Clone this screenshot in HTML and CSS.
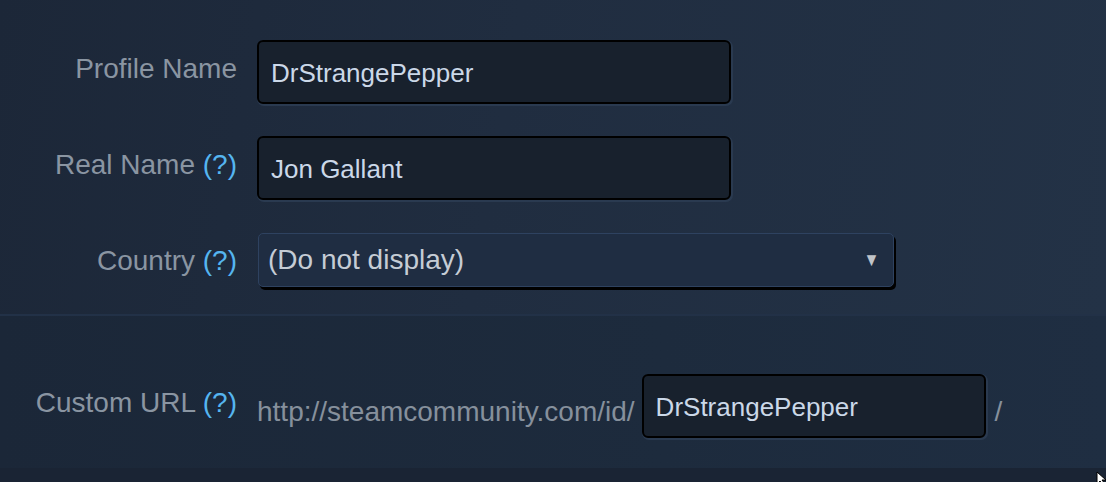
FILE: index.html
```html
<!DOCTYPE html>
<html>
<head>
<meta charset="utf-8">
<link rel="stylesheet" href="styles.css">
</head>
<body>
<div class="page">
  <section class="top">
    <div class="form">
      <div class="label">Profile Name</div>
      <div class="field"><input class="text" type="text" value="DrStrangePepper"></div>
      <div class="label">Real Name <span class="help">(?)</span></div>
      <div class="field"><input class="text" type="text" value="Jon Gallant"></div>
      <div class="label">Country <span class="help">(?)</span></div>
      <div class="field">
        <div class="select"><span>(Do not display)</span><span class="arrow">&#9660;</span></div>
      </div>
    </div>
  </section>
  <section class="mid">
    <div class="form">
      <div class="label url-label">Custom URL <span class="help">(?)</span></div>
      <div class="field url">
        <span class="prefix">http://steamcommunity.com/id/</span>
        <input class="text short" type="text" value="DrStrangePepper">
        <span class="prefix slash">/</span>
      </div>
    </div>
  </section>
  <div class="bottom"></div>
  <svg class="cursor" width="14" height="14" viewBox="0 0 14 14"><path d="M1 1 L1 13 L4 10 L7 14 L9 13 L6 9 L10 9 Z" fill="#fff" stroke="#000" stroke-width="1"/></svg>
</div>
</body>
</html>
```
FILE: styles.css
```css
html, body {
  margin: 0;
  padding: 0;
  background: #1b2738;
}
.page {
  position: relative;
  width: 1106px;
  height: 482px;
  overflow: hidden;
  font-family: "Liberation Sans", Arial, sans-serif;
  display: flex;
  flex-direction: column;
}
.top {
  height: 316px;
  padding-top: 40px;
  box-sizing: border-box;
  background: linear-gradient(100deg, #1c2738 0%, #202d40 45%, #233246 100%);
  border-bottom: 2px solid #223147;
}
.mid {
  height: 152px;
  padding-top: 58px;
  box-sizing: border-box;
  background: linear-gradient(90deg, #1b2738 0%, #1d2b3d 60%, #1f2e42 100%);
}
.bottom {
  flex: 1;
  background: #1a2434;
}
.form {
  display: grid;
  grid-template-columns: 237px auto;
  column-gap: 20px;
  row-gap: 32px;
  align-items: start;
}
.label {
  text-align: right;
  color: #8a95a2;
  font-size: 28px;
  line-height: 32px;
  margin-top: 13px;
  white-space: nowrap;
}
.url-label {
  margin-top: 13px;
}
.help {
  color: #55b5f0;
}
.field {
  display: flex;
  align-items: center;
}
.text {
  box-sizing: border-box;
  width: 474px;
  height: 64px;
  margin: 0;
  padding: 2px 0 0 12px;
  border: 2px solid #000;
  border-radius: 6px;
  background: #18212d;
  color: #cbd8e8;
  font-family: "Liberation Sans", Arial, sans-serif;
  font-size: 26px;
  outline: none;
  box-shadow: 1px 1px 0 1px #2a3a50;
}
.text.short {
  width: 344px;
}
.select {
  box-sizing: border-box;
  width: 636px;
  height: 54px;
  margin-left: 1px;
  margin-top: 1px;
  padding: 0 12px 0 9px;
  display: flex;
  align-items: center;
  justify-content: space-between;
  background: #1f2d42;
  border: 1px solid #2e4260;
  border-radius: 5px;
  box-shadow: 2px 3px 0 #000;
  color: #c5ccd5;
  font-size: 28px;
}
.arrow {
  font-size: 19px;
  color: #c0c4c9;
  transform: scaleX(0.85);
}
.url {
  gap: 7px;
  align-items: flex-start;
}
.prefix {
  color: #86909c;
  font-size: 28px;
  line-height: 32px;
  margin-top: 22px;
  white-space: nowrap;
}
.slash {
  margin-left: 2px;
}
.cursor {
  position: absolute;
  left: 1096px;
  top: 471px;
}
```
